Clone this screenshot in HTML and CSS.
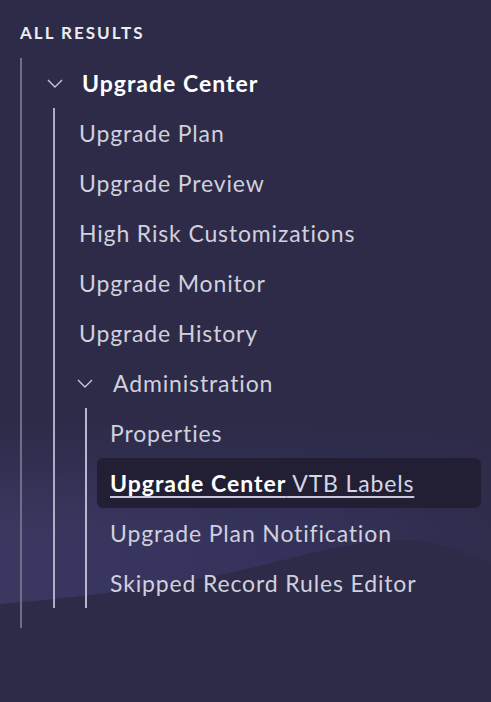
FILE: index.html
```html
<!DOCTYPE html>
<html>
<head>
<meta charset="utf-8">
<link rel="stylesheet" href="styles.css">
</head>
<body>
<div class="panel">
  <svg class="wave" width="491" height="702" viewBox="0 0 491 702" aria-hidden="true">
    <defs>
      <linearGradient id="wg" x1="0" y1="0" x2="1" y2="0">
        <stop offset="0" stop-color="#3a3860"/>
        <stop offset="0.6" stop-color="#34325a"/>
        <stop offset="1" stop-color="#2f2d4c"/>
      </linearGradient>
      <linearGradient id="wv" x1="0" y1="0" x2="0" y2="1">
        <stop offset="0" stop-color="#2d2b48" stop-opacity="1"/>
        <stop offset="1" stop-color="#2d2b48" stop-opacity="0"/>
      </linearGradient>
    </defs>
    <path d="M0 420 L491 420 L491 565 C460 548 430 538 390 540 C330 545 290 560 220 575 C140 590 70 598 0 604 Z" fill="url(#wg)"/>
    <rect x="0" y="420" width="491" height="110" fill="url(#wv)"/>
  </svg>
  <div class="title">ALL RESULTS</div>
  <div class="tree">
    <div class="row top">
      <svg class="chev" width="16" height="9" viewBox="0 0 16 9"><path d="M1 1 L8 8 L15 1" fill="none" stroke="#c9c8d8" stroke-width="1.4"/></svg>
      <span class="top-label">Upgrade Center</span>
    </div>
    <div class="sub">
      <div class="row item">Upgrade Plan</div>
      <div class="row item">Upgrade Preview</div>
      <div class="row item">High Risk Customizations</div>
      <div class="row item">Upgrade Monitor</div>
      <div class="row item">Upgrade History</div>
      <div class="row admin">
        <svg class="chev" width="16" height="9" viewBox="0 0 16 9"><path d="M1 1 L8 8 L15 1" fill="none" stroke="#c9c8d8" stroke-width="1.4"/></svg>
        <span>Administration</span>
      </div>
      <div class="subsub">
        <div class="row leaf">Properties</div>
        <div class="row leaf active"><span class="link"><b>Upgrade Center</b> VTB Labels</span></div>
        <div class="row leaf">Upgrade Plan Notification</div>
        <div class="row leaf">Skipped Record Rules Editor</div>
      </div>
    </div>
  </div>
</div>
</body>
</html>
```
FILE: styles.css
```css
html, body {
  margin: 0;
  padding: 0;
  background: #2d2b48;
}
.panel {
  position: relative;
  width: 491px;
  height: 702px;
  overflow: hidden;
  font-family: Lato, "Noto Sans", sans-serif;
  color: #d0d0de;
}
.wave {
  position: absolute;
  left: 0;
  top: 0;
  z-index: 0;
}
.title, .tree {
  position: relative;
  z-index: 1;
}
.title {
  padding: 24px 0 0 20px;
  height: 18px;
  line-height: 18px;
  font-size: 17px;
  font-weight: 700;
  letter-spacing: 2px;
  color: #ecebf3;
}
.tree {
  margin: 16px 0 0 20px;
  border-left: 2px solid #6f6e86;
  padding-bottom: 20px;
}
.row {
  height: 50px;
  display: flex;
  align-items: center;
  font-size: 23px;
  letter-spacing: 0.85px;
  white-space: nowrap;
}
.top {
  padding-left: 25px;
  gap: 19px;
}
.top-label {
  font-size: 23px;
  font-weight: 700;
  letter-spacing: 1px;
  color: #ffffff;
}
.sub {
  margin-left: 31px;
  border-left: 2px solid #aeadc6;
}
.item {
  padding-left: 24px;
}
.admin {
  padding-left: 22px;
  gap: 20px;
}
.subsub {
  margin-left: 30px;
  border-left: 2px solid #b8b7cf;
}
.leaf {
  padding-left: 23px;
}
.active {
  margin: 0 10px 0 10px;
  padding-left: 13px;
  background: #221f35;
  border-radius: 6px;
}
.link {
  color: #d6d6e4;
  text-decoration: underline;
  text-decoration-thickness: 2px;
  text-underline-offset: 4px;
  text-decoration-color: #c8c7da;
}
.link b {
  color: #ffffff;
  font-weight: 700;
  letter-spacing: 1px;
}
```
